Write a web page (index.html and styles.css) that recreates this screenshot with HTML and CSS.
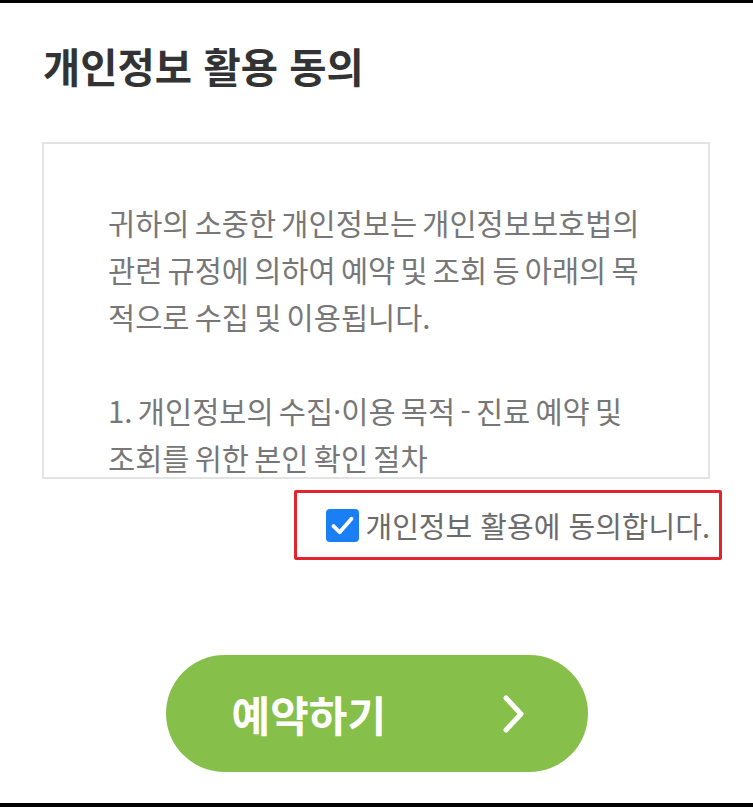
FILE: index.html
```html
<!DOCTYPE html>
<html lang="ko">
<head>
<meta charset="utf-8">
<title>개인정보 활용 동의</title>
<link rel="stylesheet" href="styles.css">
</head>
<body>
<div class="page">
  <h1 class="title">개인정보 활용 동의</h1>
  <div class="terms">
    <p>귀하의 소중한 개인정보는 개인정보보호법의 관련 규정에 의하여 예약 및 조회 등 아래의 목적으로 수집 및 이용됩니다.</p>
    <p>1. 개인정보의 수집·이용 목적 - 진료 예약 및 조회를 위한 본인 확인 절차</p>
    <p>2. 수집하는 개인정보의 항목 - 성명, 생년월일, 휴대전화번호</p>
  </div>
  <div class="agree-row">
    <label class="agree">
      <span class="check">
        <svg viewBox="0 0 24 24" width="27" height="27"><path d="M4 12.5 L9.5 18 L20 6" fill="none" stroke="#fff" stroke-width="3.4" stroke-linecap="round" stroke-linejoin="round"/></svg>
      </span>
      <span class="agree-text">개인정보 활용에 동의합니다.</span>
    </label>
  </div>
  <div class="btn-row">
    <button class="reserve">
      <span class="reserve-label">예약하기</span>
      <svg viewBox="0 0 24 40" width="24" height="40"><path d="M4 4 L19 20 L4 36" fill="none" stroke="#fff" stroke-width="5" stroke-linecap="round" stroke-linejoin="round"/></svg>
    </button>
  </div>
</div>
</body>
</html>
```

FILE: styles.css
```css
html, body {
  margin: 0;
  padding: 0;
  background: #fff;
}
.page {
  box-sizing: border-box;
  height: 807px;
  border-top: 3px solid #000;
  border-bottom: 4px solid #000;
  font-family: "Noto Sans CJK KR", "Noto Sans", sans-serif;
  display: flex;
  flex-direction: column;
}
.title {
  margin: 38px 0 0 43px;
  font-size: 40.5px;
  line-height: 50px;
  font-weight: 700;
  color: #333;
}
.terms {
  box-sizing: border-box;
  margin: 51px 0 0 42px;
  width: 668px;
  height: 337px;
  border: 2px solid #e3e3e3;
  padding: 55px 56px 0 64px;
  overflow: hidden;
  color: #777;
  font-size: 29.5px;
  line-height: 47px;
  word-spacing: -3px;
  word-break: break-all;
}
.terms p {
  margin: 0 0 47px 0;
}
.agree-row {
  display: flex;
  justify-content: flex-end;
  padding-right: 31px;
  margin-top: 11px;
}
.agree {
  box-sizing: border-box;
  width: 428px;
  height: 70px;
  border: 3px solid #e4242c;
  border-radius: 2px;
  display: flex;
  align-items: center;
  justify-content: flex-end;
  padding-right: 9px;
  gap: 7px;
}
.check {
  flex: none;
  width: 33px;
  height: 33px;
  border-radius: 4px;
  background: #1a7ff5;
  display: flex;
  align-items: center;
  justify-content: center;
}
.agree-text {
  font-size: 29px;
  color: #6b6b6b;
  line-height: 40px;
  white-space: nowrap;
}
.btn-row {
  display: flex;
  justify-content: center;
  margin-top: 95px;
}
.reserve {
  box-sizing: border-box;
  width: 422px;
  height: 117px;
  border: none;
  border-radius: 59px;
  background: #86c04a;
  color: #fff;
  font-family: "Noto Sans CJK KR", "Noto Sans", sans-serif;
  font-size: 42px;
  font-weight: 700;
  display: flex;
  align-items: center;
  justify-content: space-between;
  padding: 0 62px 0 66px;
}
.reserve-label {
  line-height: 60px;
}
```
